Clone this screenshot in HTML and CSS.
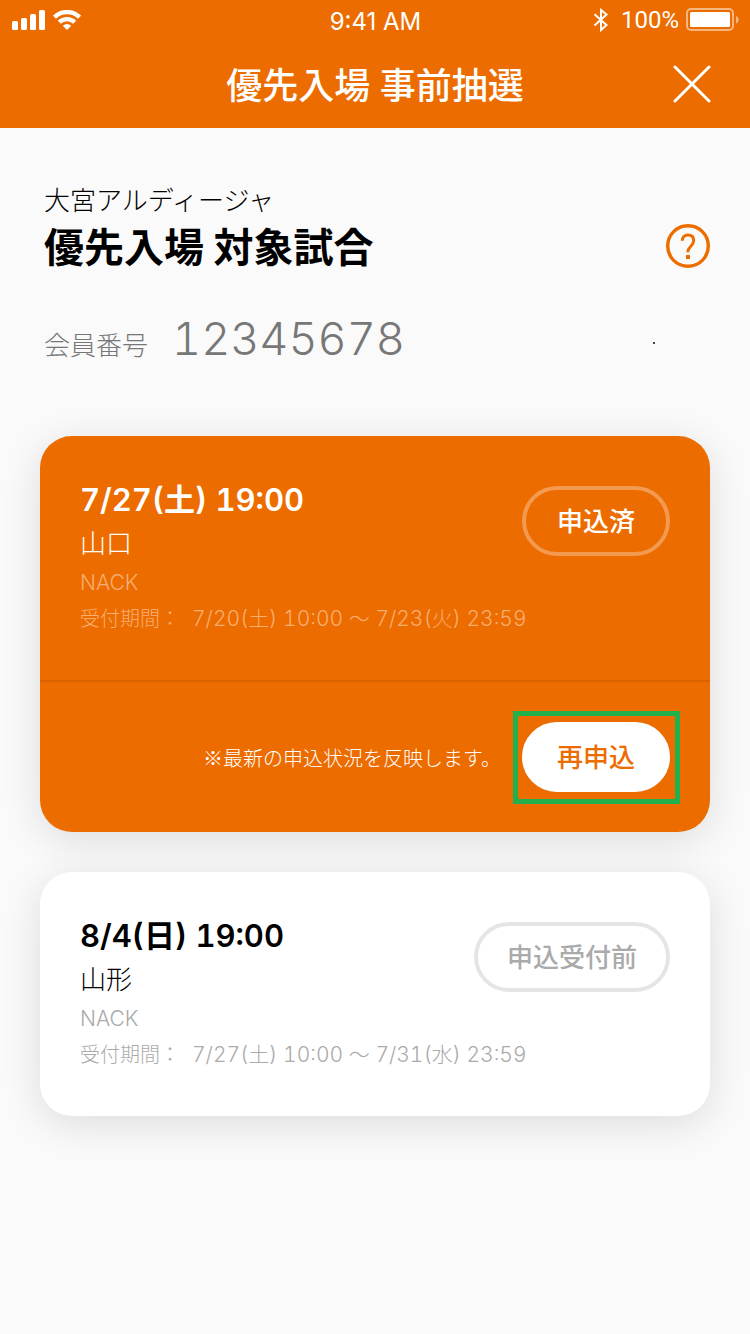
FILE: index.html
```html
<!DOCTYPE html>
<html lang="ja">
<head>
<meta charset="utf-8">
<meta name="viewport" content="width=device-width, initial-scale=1">
<title>優先入場 事前抽選</title>
<link rel="stylesheet" href="styles.css">
</head>
<body>
<header class="header">
  <div class="status">
    <div class="status-left">
      <svg width="34" height="20" viewBox="0 0 34 20" fill="#fff" aria-hidden="true"><rect x="0" y="11" width="6" height="9" rx="1.5"/><rect x="9" y="8" width="6" height="12" rx="1.5"/><rect x="18" y="4" width="6" height="16" rx="1.5"/><rect x="27" y="0" width="6" height="20" rx="1.5"/></svg>
      <svg width="28" height="20" viewBox="0 0 28 20" aria-hidden="true"><g fill="none" stroke="#fff" stroke-width="4.4"><path d="M1.500 7.200a17.800 17.800 0 0 1 25 0"/><path d="M6.300 12.300a11 11 0 0 1 15.400 0"/></g><path d="M14 20l-4.200-4.300a6 6 0 0 1 8.400 0z" fill="#fff"/></svg>
    </div>
    <time class="clock">9:41 AM</time>
    <div class="status-right">
      <svg class="bluetooth" width="16" height="24" viewBox="0 0 16 24" fill="none" stroke="#fff" stroke-width="2" aria-hidden="true"><path d="M1.500 6.300L13.500 17 8 22V2l5.500 4.500L1.500 17.500"/></svg>
      <span class="charge">100%</span>
      <svg width="53" height="24" viewBox="0 0 53 24" aria-hidden="true"><rect x="1" y="1" width="46" height="21" rx="4" fill="none" stroke="#fff" stroke-opacity=".5" stroke-width="2"/><rect x="4" y="4" width="40" height="15" rx="1.500" fill="#fff"/><path d="M50 8c3.500 1 3.500 6.500 0 7.500z" fill="#fff" fill-opacity=".5"/></svg>
    </div>
  </div>
  <div class="nav">
    <h1 class="nav-title">優先入場 事前抽選</h1>
    <button class="close" type="button" aria-label="閉じる">
      <svg width="38" height="38" viewBox="0 0 38 38" stroke="#fff" stroke-width="3" stroke-linecap="round"><path d="M2 2l34 34M36 2L2 36"/></svg>
    </button>
  </div>
</header>
<main class="main">
  <section class="intro">
    <div class="intro-row">
      <div>
        <p class="club">大宮アルディージャ</p>
        <h2 class="heading">優先入場 対象試合</h2>
      </div>
      <button class="help" type="button" aria-label="ヘルプ">
        <svg width="44" height="44" viewBox="0 0 44 44" fill="none" stroke="#ed6c00"><circle cx="22" cy="22" r="20.300" stroke-width="3.400"/><path d="M16.300 16.800c0-3.800 2.100-5.800 5.700-5.800s5.700 2 5.700 5.300c0 2.700-1.200 4.200-2.900 5.900-2 2-3 3-3 6" stroke-width="3"/><path d="M20 31h4v4h-4z" fill="#ed6c00" stroke="none"/></svg>
      </button>
    </div>
    <div class="member">
      <span class="member-label">会員番号</span>
      <span class="member-number">12345678</span>
      <span class="dot"></span>
    </div>
  </section>
  <article class="card card-active">
    <div class="match">
      <div>
        <h3 class="date">7/27(土) 19:00</h3>
        <p class="team">山口</p>
        <p class="venue">NACK</p>
        <p class="period"><span class="period-label">受付期間：</span><span>7/20(土) 10:00 〜 7/23(火) 23:59</span></p>
      </div>
      <button class="pill pill-done" type="button">申込済</button>
    </div>
    <footer class="card-footer">
      <p class="note">※最新の申込状況を反映します。</p>
      <div class="highlight">
        <button class="pill pill-solid" type="button">再申込</button>
      </div>
    </footer>
  </article>
  <article class="card">
    <div class="match">
      <div>
        <h3 class="date">8/4(日) 19:00</h3>
        <p class="team">山形</p>
        <p class="venue">NACK</p>
        <p class="period"><span class="period-label">受付期間：</span><span>7/27(土) 10:00 〜 7/31(水) 23:59</span></p>
      </div>
      <button class="pill pill-waiting" type="button" disabled>申込受付前</button>
    </div>
  </article>
</main>
</body>
</html>
```
FILE: styles.css
```css
* {
  box-sizing: border-box;
}

body {
  margin: 0;
  background: #fafafa;
  color: #000;
  font-family: Inter, "Noto Sans CJK JP", sans-serif;
}

h1, h2, h3, p {
  margin: 0;
}

button {
  margin: 0;
  padding: 0;
  border: 0;
  background: none;
  font: inherit;
  cursor: pointer;
}

svg {
  display: block;
}

.header {
  background: #ed6c00;
  color: #fff;
}

.status {
  display: grid;
  grid-template-columns: 1fr auto 1fr;
  align-items: center;
  height: 40px;
  padding: 0 11px 0 12px;
  font-size: 24px;
}

.status-left,
.status-right {
  display: flex;
  align-items: center;
  gap: 7px;
}

.status-right {
  justify-content: flex-end;
}

.bluetooth {
  margin-right: 5px;
}

.charge {
  font-family: Roboto, sans-serif;
}

.clock {
  padding-top: 3px;
}

.nav {
  display: grid;
  grid-template-columns: 1fr auto 1fr;
  align-items: center;
  height: 88px;
  padding: 0 39px;
}

.nav-title {
  grid-column: 2;
  padding-top: 4px;
  font-size: 36px;
  font-weight: 500;
  line-height: 84px;
}

.close {
  justify-self: end;
}

.main {
  display: flex;
  flex-direction: column;
  gap: 40px;
  padding: 54px 40px;
}

.intro {
  padding: 0 0 20px 4px;
}

.intro-row {
  display: flex;
  justify-content: space-between;
  align-items: flex-end;
}

.club {
  font-size: 26px;
  font-weight: 300;
  line-height: 38px;
}

.heading {
  font-size: 40px;
  font-weight: 700;
  line-height: 56px;
}

.help {
  margin-bottom: 8px;
}

.member {
  display: flex;
  align-items: baseline;
  margin-top: 33px;
  color: #777;
  font-weight: 300;
  font-variant-numeric: tabular-nums;
  line-height: 60px;
}

.member-label {
  font-size: 26px;
}

.member-number {
  margin-left: 24px;
  font-size: 45px;
}

.dot {
  align-self: center;
  width: 2px;
  height: 2px;
  margin: 0 55px 0 auto;
  background: #444;
}

.card {
  border-radius: 32px;
  background: #fff;
  box-shadow: 0 8px 40px rgba(0, 0, 0, 0.12);
}

.card-active {
  background: #ed6c00;
  color: #fff;
}

.match {
  display: flex;
  justify-content: space-between;
  align-items: flex-start;
  padding: 40px 40px 45px;
  font-variant-numeric: tabular-nums;
}

.match > div {
  min-width: 0;
}

.date {
  font-size: 31px;
  font-weight: 600;
  line-height: 48px;
}

.team {
  font-size: 26px;
  font-weight: 300;
  line-height: 39px;
}

.venue,
.period {
  color: #aaa;
  font-size: 21px;
  font-weight: 300;
}

.venue {
  line-height: 40px;
}

.period {
  display: flex;
  gap: 12px;
  line-height: 32px;
  white-space: nowrap;
}

.period-label {
  font-size: 20px;
}

.card-active .venue,
.card-active .period {
  color: #f7ae71;
}

.pill {
  flex: none;
  min-width: 148px;
  height: 70px;
  padding: 0 29px 4px;
  border: 4px solid transparent;
  border-radius: 35px;
  font-size: 26px;
  font-weight: 500;
}

.match .pill {
  margin-top: 10px;
}

.pill-done {
  border-color: #f39a50;
  color: #fff;
}

.pill-solid {
  border-color: #fff;
  background: #fff;
  color: #ed6c00;
}

.pill-waiting {
  border-color: #e5e5e5;
  color: #aaa;
}

.card-footer {
  display: flex;
  justify-content: flex-end;
  align-items: center;
  gap: 12px;
  padding: 29px 30px 28px;
  border-top: 2px solid #da6300;
}

.note {
  font-family: "Noto Sans CJK JP", sans-serif;
  font-size: 20px;
  font-weight: 300;
  line-height: 32px;
}

.highlight {
  padding: 6px 5px 7px 4px;
  border: 5px solid #22b04c;
}
```
